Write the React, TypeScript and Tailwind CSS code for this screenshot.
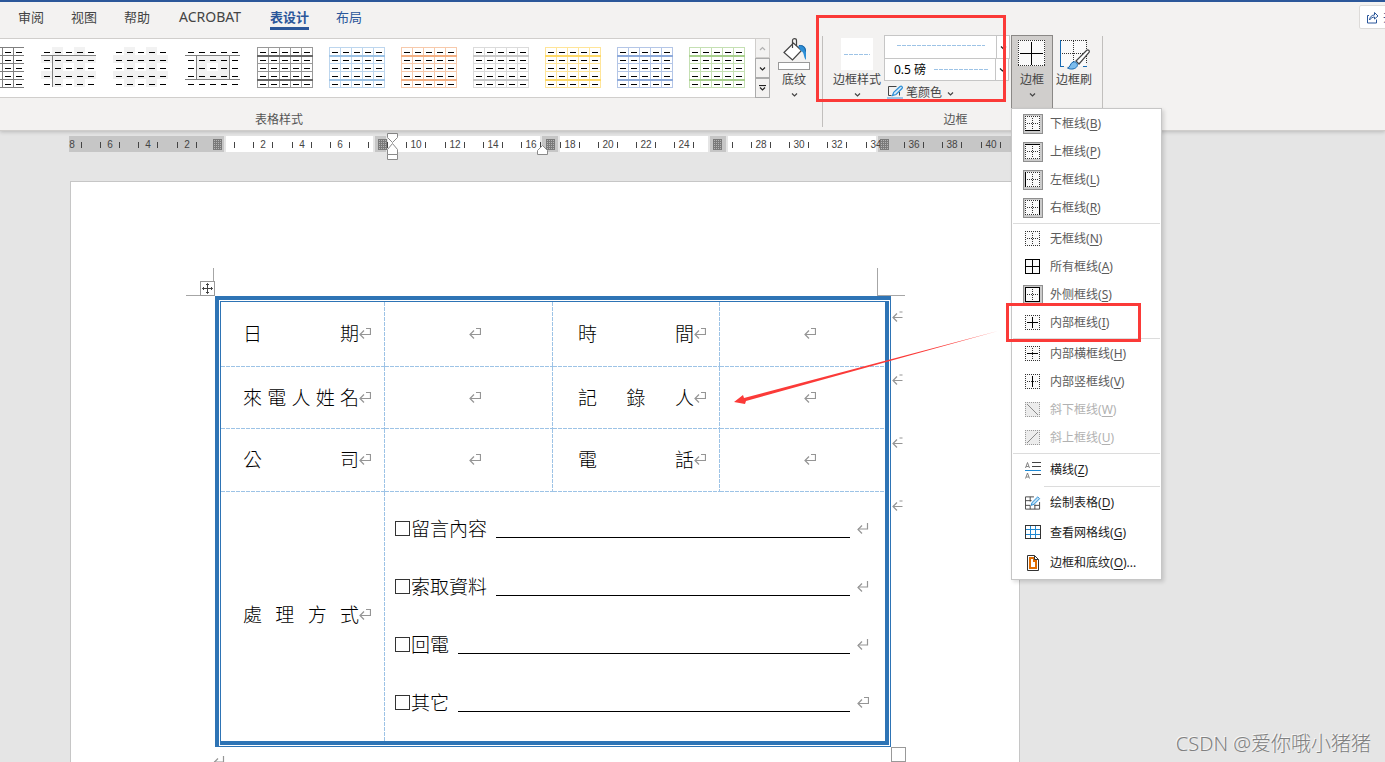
import type { ReactNode } from 'react'

const RED = '#fb3a38'

const tabs = ['审阅', '视图', '帮助', 'ACROBAT', '表设计', '布局']

type Thumb = {
  light?: string
  heavy?: string
  kind: 'open' | 'corner' | 'checker' | 'frame' | 'grid'
}

const thumbs: Thumb[] = [
  { kind: 'open' },
  { kind: 'corner' },
  { kind: 'checker' },
  { kind: 'frame' },
  { kind: 'grid', light: '#999999', heavy: '#666666' },
  { kind: 'grid', light: '#bdd6ee', heavy: '#9cc2e5' },
  { kind: 'grid', light: '#f7caac', heavy: '#f4b083' },
  { kind: 'grid', light: '#dbdbdb', heavy: '#c9c9c9' },
  { kind: 'grid', light: '#ffe599', heavy: '#ffd966' },
  { kind: 'grid', light: '#b4c6e7', heavy: '#8eaadb' },
  { kind: 'grid', light: '#c5e0b3', heavy: '#a8d08d' },
]

const cols = [0, 11, 22, 33, 44, 55]
const rows = [0, 8, 16, 24, 32, 40]

function StyleThumb({ kind, light = '#7f7f7f', heavy = '#7f7f7f' }: Thumb) {
  const ruled = kind === 'grid' || kind === 'open'
  return (
    <svg width="56" height="41" viewBox="0 0 56 41" shapeRendering="crispEdges" aria-hidden="true">
      {(kind === 'corner' || kind === 'checker') && (
        <g fill="#f2f2f2">
          <rect x="11" y="0" width="11" height="40" />
          <rect x="33" y="0" width="11" height="40" />
          <rect x="0" y="8" width="55" height="8" />
          <rect x="0" y="24" width="55" height="8" />
        </g>
      )}
      {kind === 'corner' && (
        <g fill="#7f7f7f">
          <rect x="0" y="8" width="55" height="1" />
          <rect x="11" y="8" width="1" height="32" />
        </g>
      )}
      {kind === 'frame' && (
        <g fill="#7f7f7f">
          <rect x="11" y="8" width="33" height="24" fill="#f2f2f2" />
          <rect x="22" y="16" width="11" height="8" fill="#fff" />
          <rect x="0" y="8" width="55" height="1" />
          <rect x="0" y="32" width="55" height="1" />
          <rect x="11" y="8" width="1" height="24" />
          <rect x="44" y="8" width="1" height="24" />
        </g>
      )}
      {ruled && cols.map((x) => (
        (kind === 'grid' || x < 55) && <rect key={x} x={x} y="0" width="1" height="41" fill={light} />
      ))}
      {ruled && rows.map((y) => {
        const thick = kind === 'grid' && (y === 8 || y === 32)
        return <rect key={y} x="0" y={y} width={kind === 'grid' ? 56 : 55} height={thick ? 2 : 1} fill={thick ? heavy : light} />
      })}
      {rows.slice(0, 5).map((y) => cols.slice(0, 5).map((x) => (
        <rect key={`${x}-${y}`} x={x + 3} y={y + 5} width="6" height="1" fill="#000" />
      )))}
    </svg>
  )
}

function Chevron({ up = false, bar = false, color = '#444' }: { up?: boolean; bar?: boolean; color?: string }) {
  return (
    <svg width="7" height="7" viewBox="0 0 7 7" fill="none" stroke={color} strokeWidth="1.2" aria-hidden="true">
      {bar && <path d="M0 .5h7" />}
      <path d={up ? 'M1 5l2.5-2.5L6 5' : 'M1 2.5L3.5 5 6 2.5'} />
    </svg>
  )
}

type Side = 'top' | 'bottom' | 'left' | 'right' | 'h' | 'v' | 'down' | 'up'

const strokes: Record<Side, string> = {
  top: 'M0 .5h15',
  bottom: 'M0 14.5h15',
  left: 'M.5 0v15',
  right: 'M14.5 0v15',
  h: 'M2 7.5h11',
  v: 'M7.5 2v11',
  down: 'M2 2l11 11',
  up: 'M2 13L13 2',
}

function BorderIcon({ sides = [], faded = false }: { sides?: Side[]; faded?: boolean }) {
  const diagonal = sides.includes('down') || sides.includes('up')
  const full = sides.length === 6
  return (
    <svg width="15" height="15" viewBox="0 0 15 15" fill="none" shapeRendering={diagonal ? 'auto' : 'crispEdges'} aria-hidden="true">
      <rect width="15" height="15" fill={faded ? '#ececec' : '#fafafa'} />
      {!full && (
        <g stroke={faded ? '#9a9a9a' : '#333'} strokeDasharray="1 1">
          <path d="M0 .5h15M0 14.5h15M.5 0v15M14.5 0v15" />
          {!diagonal && !sides.includes('h') && <path d="M2 7.5h11" />}
          {!diagonal && !sides.includes('v') && <path d="M7.5 2v11" />}
        </g>
      )}
      {sides.map((s) => (
        <path key={s} d={full && s === 'h' ? 'M0 7.5h15' : full && s === 'v' ? 'M7.5 0v15' : strokes[s]} stroke={faded ? '#8a8a8a' : '#000'} />
      ))}
    </svg>
  )
}

function HorizontalLineIcon() {
  return (
    <svg width="16" height="17" viewBox="0 0 16 17" fill="none" aria-hidden="true">
      <path d="M.5 6l2-5.5L4.5 6M1.2 4.5h2.6M.5 16.500l2-5.5 2 5.5M1.2 15h2.6" stroke="#777" strokeWidth=".9" />
      <path d="M7 .5h9M7 4.5h9M7 12.5h9" stroke="#444" shapeRendering="crispEdges" />
      <path d="M0 8.5h16" stroke="#1e88d2" shapeRendering="crispEdges" />
    </svg>
  )
}

function DrawTableIcon() {
  return (
    <svg width="17" height="16" viewBox="0 0 17 16" fill="none" aria-hidden="true">
      <path d="M9.5 1.5h-9v13h15V7M.5 5.5H7M.5 10.5h5M10 10.5h5.5M5.5 1.5v5M5.5 10.5v4M10.5 9.5v5" stroke="#444" />
      <path d="M6.5 10.5l1-3L13.5 1.5l2 2-6 6z" fill="#bfe0f5" stroke="#1e88d2" />
    </svg>
  )
}

function GridlinesIcon() {
  return (
    <svg width="16" height="14" viewBox="0 0 16 14" fill="none" shapeRendering="crispEdges" aria-hidden="true">
      <path d="M5.5 1v12M10.5 1v12M1 4.5h14M1 9.5h14" stroke="#1e88d2" />
      <path d="M.5.5h15v13H.5z" stroke="#333" />
    </svg>
  )
}

function PageBorderIcon() {
  return (
    <svg width="16" height="16" viewBox="-2 0 16 16" fill="none" aria-hidden="true">
      <path d="M.5.5h7l4 4v11H.5z" fill="#fff" stroke="#333" />
      <path d="M3 3h4v3h2v7H3z" stroke="#e06c00" strokeWidth="2" />
      <path d="M7.5.5v4h4" stroke="#333" />
    </svg>
  )
}

type MenuEntry = {
  text: string
  hotkey: string
  after?: string
  icon: ReactNode
  on?: boolean
  off?: boolean
}

const menuGroups: MenuEntry[][] = [
  [
    { text: '下框线', hotkey: 'B', on: true, icon: <BorderIcon sides={['bottom']} /> },
    { text: '上框线', hotkey: 'P', on: true, icon: <BorderIcon sides={['top']} /> },
    { text: '左框线', hotkey: 'L', on: true, icon: <BorderIcon sides={['left']} /> },
    { text: '右框线', hotkey: 'R', on: true, icon: <BorderIcon sides={['right']} /> },
  ],
  [
    { text: '无框线', hotkey: 'N', icon: <BorderIcon /> },
    { text: '所有框线', hotkey: 'A', icon: <BorderIcon sides={['top', 'bottom', 'left', 'right', 'h', 'v']} /> },
    { text: '外侧框线', hotkey: 'S', on: true, icon: <BorderIcon sides={['top', 'bottom', 'left', 'right']} /> },
    { text: '内部框线', hotkey: 'I', icon: <BorderIcon sides={['h', 'v']} /> },
  ],
  [
    { text: '内部横框线', hotkey: 'H', icon: <BorderIcon sides={['h']} /> },
    { text: '内部竖框线', hotkey: 'V', icon: <BorderIcon sides={['v']} /> },
    { text: '斜下框线', hotkey: 'W', off: true, icon: <BorderIcon sides={['down']} faded /> },
    { text: '斜上框线', hotkey: 'U', off: true, icon: <BorderIcon sides={['up']} faded /> },
  ],
]

const menuTail: MenuEntry[] = [
  { text: '绘制表格', hotkey: 'D', icon: <DrawTableIcon /> },
  { text: '查看网格线', hotkey: 'G', icon: <GridlinesIcon /> },
  { text: '边框和底纹', hotkey: 'O', after: '...', icon: <PageBorderIcon /> },
]

function MenuItem({ item, dark = false }: { item: MenuEntry; dark?: boolean }) {
  const color = item.off ? 'text-[#b1b1b1]' : dark ? 'text-[#222]' : 'text-[#5c5c5c]'
  return (
    <button type="button" role="menuitem" disabled={item.off} className={`flex w-full items-center gap-[7px] pl-[11px] text-left text-xs ${dark ? 'h-[30px]' : 'h-7'} ${color}`}>
      <span className={`flex size-5 shrink-0 items-start ${item.on ? 'border border-[#8f8f8f] bg-[#cbcbcb] p-px' : 'p-0.5'}`}>
        {item.icon}
      </span>
      <span className="whitespace-nowrap">
        {item.text}(<u className="underline-offset-2">{item.hotkey}</u>){item.after}
      </span>
    </button>
  )
}

function BordersMenu() {
  return (
    <div role="menu" aria-label="边框" className="absolute top-full -left-px z-20 w-[151px] border border-[#c6c6c6] bg-white py-px shadow-[2px_2px_4px_rgba(0,0,0,0.15)]">
      {menuGroups.map((group, i) => (
        <div key={i}>
          {group.map((item) => <MenuItem key={item.hotkey} item={item} />)}
          <hr className="mx-px my-px border-[#dcdcdc]" />
        </div>
      ))}
      <MenuItem dark item={{ text: '横线', hotkey: 'Z', icon: <HorizontalLineIcon /> }} />
      <hr className="my-px mr-px ml-8 border-[#dcdcdc]" />
      {menuTail.map((item) => <MenuItem key={item.hotkey} item={item} dark />)}
    </div>
  )
}

function BigButton({ label, icon, chevron = true }: { label: string; icon: ReactNode; chevron?: boolean }) {
  return (
    <button type="button" className="flex w-full flex-col items-center pt-[3px] text-xs leading-4 whitespace-nowrap text-[#444]">
      <span className="flex h-[34px] items-start">{icon}</span>
      <span>{label}</span>
      {chevron && <span className="flex h-3 items-center"><Chevron /></span>}
    </button>
  )
}

function ShadingIcon() {
  return (
    <svg width="32" height="33" viewBox="0 0 32 33" fill="none" aria-hidden="true">
      <path d="M6 14.5L15.5 5l8 7.5L14.5 22z" fill="#fff" stroke="#444" strokeWidth="1.2" />
      <path d="M14.5 10V2.5c0-2.500 4-2.500 4 0V8" stroke="#444" strokeWidth="1.2" />
      <path d="M20 8c4-2 8 0 8 5v9c-3-3-1-7-5-9z" fill="#2e8fd6" />
      <path d="M21 7.5c4-.5 6.500 2 6.500 6" stroke="#1a5f9e" />
      <path d="M.5 24.5h31v7H.5z" fill="#fff" stroke="#999" shapeRendering="crispEdges" />
    </svg>
  )
}

function BordersIcon() {
  return (
    <svg width="28" height="28" viewBox="0 0 28 28" fill="none" shapeRendering="crispEdges" aria-hidden="true">
      <path d="M0 2h27v26H0z" fill="#fafafa" />
      <path d="M0 2.5h27M0 27.5h27M.5 2v26M26.5 2v26" stroke="#333" strokeDasharray="1 1" />
      <path d="M2 15.5h23M13.5 4v23" stroke="#000" />
    </svg>
  )
}

function BorderPainterIcon() {
  return (
    <svg width="32" height="32" viewBox="0 0 32 32" fill="none" aria-hidden="true">
      <path d="M2 2h26v26H2z" fill="#fafafa" />
      <path d="M3 2.5h26M15.5 3v25M4 15.5h24M28.5 2v24" stroke="#333" strokeDasharray="1 1" shapeRendering="crispEdges" />
      <path d="M2.5 2v26M2 28.5h4M25 28.5h4" stroke="#1668b0" shapeRendering="crispEdges" />
      <path d="M18 23L28.5 12.5c1.500-1.500 3.500 0 2.500 2L21 26z" fill="#fff" stroke="#444" strokeWidth="1.2" />
      <path d="M9.5 30c3-.5 2.500-5 5.500-6s5.500 2 4 4.500-6 3.500-9.500 1.500z" fill="#7cbcec" stroke="#1668b0" />
    </svg>
  )
}

function PenIcon() {
  return (
    <svg width="17" height="16" viewBox="0 0 17 16" fill="none" aria-hidden="true">
      <path d="M9.5 1.5h-8v9h3M12.5 7v3.5" stroke="#444" />
      <path d="M5.5 10.5l1.2-3.2L13 1.5c1.500-1 3.200.5 2 2L9 9.5z" fill="#d3e9f8" stroke="#2e8fd6" strokeWidth="1.2" />
      <path d="M0 12h16v4H0z" fill="#9dc3e6" />
    </svg>
  )
}

function Dashes({ className }: { className: string }) {
  return <span aria-hidden="true" className={`h-px bg-[repeating-linear-gradient(90deg,#9dc3e6_0_4px,transparent_4px_5px)] ${className}`} />
}

function Ribbon() {
  return (
    <header className="relative z-10 shrink-0 border-t-2 border-b border-t-[#2b579a] border-b-[#cfcdcb] bg-[#f3f2f1] shadow-[0_1px_4px_rgba(0,0,0,0.2)]">
      <div className="flex h-[33px] items-start justify-between">
        <nav className="flex gap-[27px] pt-[5px] pl-[18px] text-[13px] leading-5">
          {tabs.map((tab) => {
            const active = tab === '表设计'
            const color = active ? 'border-[#2b579a] font-bold text-[#2b579a]' : tab === '布局' ? 'border-transparent text-[#2b579a]' : 'border-transparent text-[#444]'
            return (
              <a key={tab} href="#" aria-current={active ? 'page' : undefined} className={`border-b-3 ${color} ${tab === 'ACROBAT' ? 'px-0.5 text-sm' : ''}`}>
                {tab}
              </a>
            )
          })}
        </nav>
        <div className="w-[26px] overflow-hidden pt-[3px]">
          <button type="button" className="flex h-6 w-[70px] items-center gap-[3px] rounded-xs border border-[#dddbd9] bg-white pl-[6px] text-[13px] text-[#2b579a]">
            <svg width="14" height="13" viewBox="0 0 14 13" fill="none" stroke="#2b579a" aria-hidden="true">
              <path d="M3 4.5H1.500v7.500h9V8.5" />
              <path d="M3.5 9C4 5.5 6 4 8.5 4V1.5L12 5 8.5 8V6C6.5 6 5 7 3.5 9z" />
            </svg>
            共享
          </button>
        </div>
      </div>

      <div className="flex h-[95px] items-start">
        <section aria-label="表格样式" className="mt-px h-[91px] w-[823px] shrink-0 border-r border-[#c1bfbd]">
          <div className="flex h-[73px]">
            <div className="mt-[2px] flex h-[60px] w-[755px] items-start justify-end gap-4 overflow-hidden border-y border-[#d0cecc] bg-white pt-2 pr-[10px]">
              {thumbs.map((t, i) => (
                <button key={i} type="button" aria-label={`表格样式 ${i + 1}`} className="shrink-0">
                  <StyleThumb {...t} />
                </button>
              ))}
            </div>
            <div className="mt-[2px] flex h-[60px] w-[15px] flex-col">
              <button type="button" aria-label="上一行" className="flex flex-1 items-center justify-center border border-[#d0cecc]"><Chevron up color="#b0b0b0" /></button>
              <button type="button" aria-label="下一行" className="flex flex-1 items-center justify-center border border-[#ababab]"><Chevron color="#222" /></button>
              <button type="button" aria-label="其他" className="flex flex-1 items-center justify-center border border-[#ababab]"><Chevron bar color="#222" /></button>
            </div>
            <div className="-mt-px w-12">
              <BigButton label="底纹" icon={<ShadingIcon />} />
            </div>
          </div>
          <p className="pl-[255px] text-xs leading-[22px] text-[#555]">表格样式</p>
        </section>

        <section aria-label="边框" className="mt-px h-[91px] w-[280px] shrink-0 border-r border-[#c1bfbd]">
          <div className="-mt-px flex h-[74px] pl-[10px]">
            <div className="w-12">
              <BigButton
                label="边框样式"
                icon={<span className="flex size-8 items-center justify-center bg-white"><Dashes className="w-[26px]" /></span>}
              />
            </div>
            <div className="ml-[3px] flex w-[126px] flex-col">
              <button type="button" aria-label="笔样式" aria-haspopup="listbox" className="flex h-6 items-stretch border border-[#c6c6c6] bg-white">
                <span className="flex flex-1 items-start justify-center pt-[9px]"><Dashes className="w-[88px]" /></span>
                <span className="flex w-[13px] items-center justify-center border-l border-[#c6c6c6]"><Chevron color="#222" /></span>
              </button>
              <div className="relative -mt-px flex h-[23px] w-[125px] items-center border border-[#c6c6c6] bg-white">
                <select aria-label="笔划粗细" className="h-full w-full appearance-none bg-transparent pl-[9px] text-xs text-black">
                  <option>0.5 磅</option>
                </select>
                <span className="pointer-events-none absolute inset-y-0 right-0 flex items-center gap-[6px]">
                  <Dashes className="w-[55px]" />
                  <span className="flex h-full w-[13px] items-center justify-center border-l border-[#c6c6c6]"><Chevron color="#222" /></span>
                </span>
              </div>
              <button type="button" className="mt-0.5 flex h-5 items-center gap-[2px] pl-[3px] text-xs text-[#444]">
                <PenIcon />
                <span>笔颜色</span>
                <span className="pl-[3px]"><Chevron /></span>
              </button>
            </div>
            <div className="relative ml-px h-[74px] w-[42px] border border-[#8a8886] bg-[#d0cecc]">
              <div className="-mt-px"><BigButton label="边框" icon={<BordersIcon />} /></div>
              <BordersMenu />
            </div>
            <div className="w-[42px]">
              <BigButton label="边框刷" icon={<BorderPainterIcon />} chevron={false} />
            </div>
          </div>
          <p className="pr-[14px] text-center text-xs leading-[22px] text-[#555]">边框</p>
        </section>
      </div>
    </header>
  )
}

const rulerBands = [
  [226, 373], [388, 540], [560, 708], [728, 876],
]
const rulerStops = [213, 378, 546, 713, 880]
const rulerUnits = Array.from({ length: 25 }, (_, i) => i - 4)

function Ruler() {
  return (
    <svg className="block h-8 w-full shrink-0" role="img" aria-label="标尺" shapeRendering="crispEdges">
      <rect x="69" y="5" width="960" height="16" fill="#c6c6c6" />
      {rulerBands.map(([a, b]) => (
        <g key={a}>
          <rect x={a - 2} y="5" width={b - a + 4} height="16" fill="#e5e5e5" />
          <rect x={a} y="5" width={b - a} height="16" fill="#fff" />
        </g>
      ))}
      {rulerUnits.map((n) => {
        const x = Math.round(225 + n * 38.28)
        const hidden = n === 0 || n === 4 || n === 13
        return (
          <g key={n}>
            {!hidden && (
              <text x={x} y="17" textAnchor="middle" className="fill-[#444] font-['Liberation_Sans',sans-serif] text-[10px]">
                {Math.abs(n * 2)}
              </text>
            )}
            <rect x={x + 9} y="11" width="1" height="6" fill="#444" />
            {n > -4 && <rect x={x - 10} y="11" width="1" height="6" fill="#444" />}
          </g>
        )
      })}
      {rulerStops.map((x) => (
        <g key={x}>
          <rect x={x} y="8" width="9" height="11" fill="#b4b4b4" />
          <path
            d={`M${x} 8.5h9m-9 2h9m-9 2h9m-9 2h9m-9 2h9m-9 2h9M${x + 0.5} 8v11m2-11v11m2-11v11m2-11v11m2-11v11`}
            stroke="#7a7a7a"
          />
        </g>
      ))}
      <g fill="#fff" stroke="#8a8a8a" shapeRendering="auto">
        <path d="M387.5 2.5h10v4l-5 5-5-5z" />
        <path d="M387.5 23.5v-5l5-6 5 6v5z" />
        <path d="M387.5 23.5h10v5h-10z" />
        <path d="M537.5 23.5v-4l5-5 5 5v4z" />
      </g>
    </svg>
  )
}

function Mark({ kind = 'cell' }: { kind?: 'cell' | 'line' | 'row' }) {
  return (
    <svg width="12" height="12" viewBox="0 0 12 12" fill="none" stroke="#959595" strokeWidth="1.2" className="shrink-0" aria-hidden="true">
      {kind === 'cell' && <path d="M7 1.5h4.500v6H1.500" />}
      {kind === 'line' && <path d="M10.5 1v6H1" />}
      {kind === 'row' && <path d="M1 7.5h9.500M7.5 2h3" />}
      <path d="M5 3.5l-4 4 4 4" />
    </svg>
  )
}

// Dashed rules sit on the right and bottom edge of a cell.
const dashBoth =
  'bg-[repeating-linear-gradient(90deg,#9dc3e6_0_4px,transparent_4px_5px),repeating-linear-gradient(180deg,#9dc3e6_0_4px,transparent_4px_5px)] bg-[length:100%_1px,1px_100%] bg-[position:0_100%,100%_0] bg-no-repeat'
const dashBottom =
  'bg-[repeating-linear-gradient(90deg,#9dc3e6_0_4px,transparent_4px_5px)] bg-[length:100%_1px] bg-[position:0_100%] bg-no-repeat'
const dashRight =
  'bg-[repeating-linear-gradient(180deg,#9dc3e6_0_4px,transparent_4px_5px)] bg-[length:1px_100%] bg-[position:100%_0] bg-no-repeat'

const formRows = [
  { left: '日 期', right: '時 間', height: 'h-[65px]' },
  { left: '來 電 人 姓 名', right: '記 錄 人', height: 'h-[62px]' },
  { left: '公 司', right: '電 話', height: 'h-[63px]' },
]

const actions = ['留言內容', '索取資料', '回電', '其它']

function Spread({ text }: { text: string }) {
  return (
    <div className="flex items-center">
      <span className="w-[116px] [text-align-last:justify]">{text}</span>
      <Mark />
    </div>
  )
}

function FormTable() {
  return (
    <div className="w-[676px] border-t-4 border-r border-b border-l-4 border-[#2e74b5] p-px">
      <div className="border-t border-r-4 border-b-4 border-l border-[#2e74b5]">
        <table className="w-full table-fixed border-collapse font-['Noto_Sans_CJK_TC',sans-serif] text-[19px] leading-6 font-light text-black">
          <colgroup>
            <col className="w-[164px]" />
            <col className="w-[168px]" />
            <col className="w-[167px]" />
            <col />
          </colgroup>
          <tbody>
            {formRows.map((r) => (
              <tr key={r.left} className={r.height}>
                <th scope="row" className={`pb-[3px] pl-[22px] font-light ${dashBoth}`}><Spread text={r.left} /></th>
                <td className={`pb-[3px] pl-3 ${dashBoth}`}><div className="flex justify-center"><Mark /></div></td>
                <th scope="row" className={`pb-[3px] pl-[25px] font-light ${dashBoth}`}><Spread text={r.right} /></th>
                <td className={`pb-[3px] pl-[14px] ${dashBottom}`}><div className="flex justify-center"><Mark /></div></td>
              </tr>
            ))}
            <tr className="h-[249px]">
              <th scope="row" className={`pb-[5px] pl-[22px] font-light ${dashRight}`}><Spread text="處 理 方 式" /></th>
              <td colSpan={3} className="pt-[7px] pr-4 pl-[10px] align-top">
                {actions.map((a, i) => (
                  <div key={a} className="flex h-[58px] items-center">
                    <input id={`action-${i}`} type="checkbox" className="size-[15px] appearance-none border border-[#333]" />
                    <label htmlFor={`action-${i}`} className="pr-[9px] pl-px">{a}</label>
                    <span className="mr-[7px] h-5 flex-1 border-b border-black" />
                    <Mark kind={i === 3 ? 'cell' : 'line'} />
                  </div>
                ))}
              </td>
            </tr>
          </tbody>
        </table>
      </div>
    </div>
  )
}

function MoveHandle() {
  return (
    <svg width="15" height="15" viewBox="0 0 15 15" fill="none" className="absolute right-[-2px] bottom-[-1px]" aria-hidden="true">
      <rect x=".5" y=".5" width="14" height="14" fill="#fff" stroke="#999" />
      <path d="M7.5 2.5v10M2.5 7.5h10M6 4l1.500-1.500L9 4M6 11l1.500 1.500L9 11M4 6L2.5 7.5 4 9M11 6l1.500 1.500L11 9" stroke="#444" />
    </svg>
  )
}

function Page() {
  return (
    <article className="ml-[70px] w-[950px] shrink-0 border border-b-0 border-[#c6c6c6] bg-white pt-[86px]">
      <div className="ml-[115px] flex w-[719px] justify-between">
        <span className="relative size-7 border-r border-b border-[#a6a6a6]"><MoveHandle /></span>
        <span className="size-7 border-b border-l border-[#a6a6a6]" />
      </div>
      <div className="ml-[144px] flex">
        <FormTable />
        <div className="flex flex-col gap-[51px] pt-[14px] pl-px">
          {[0, 1, 2, 3].map((i) => <Mark key={i} kind="row" />)}
        </div>
      </div>
      <div className="ml-[142px] flex w-[693px] items-start justify-between">
        <span className="pt-2"><Mark kind="line" /></span>
        <span className="size-[15px] border border-[#999]" />
      </div>
    </article>
  )
}

function Annotations() {
  return (
    <div className="pointer-events-none absolute inset-0 z-30">
      <div className="absolute top-[15px] left-[816px] h-[87px] w-[190px] border-3 border-[#fb3a38]" />
      <div className="absolute top-[303px] left-[1006px] h-[39px] w-[135px] border-3 border-[#fb3a38]" />
      <svg className="absolute top-[325px] left-[730px]" width="272" height="85" viewBox="0 0 272 85" aria-hidden="true">
        <path d="M4 77l9-7 1 3L268 6 16 76l-1 3z" fill={RED} />
      </svg>
      <p className="absolute right-[14px] bottom-1 text-xl leading-7 font-light text-[#808080] [text-shadow:-1px_-1px_0_#f6f6f6]">
        CSDN @爱你哦小猪猪
      </p>
    </div>
  )
}

export default function App() {
  return (
    <div className="relative flex h-screen flex-col overflow-hidden bg-[#e5e5e5] font-['Noto_Sans','Noto_Sans_CJK_SC',sans-serif]">
      <Ribbon />
      <main className="flex min-h-0 flex-1 flex-col">
        <Ruler />
        <div className="flex min-h-0 flex-1 pt-[18px]">
          <Page />
        </div>
      </main>
      <Annotations />
    </div>
  )
}
